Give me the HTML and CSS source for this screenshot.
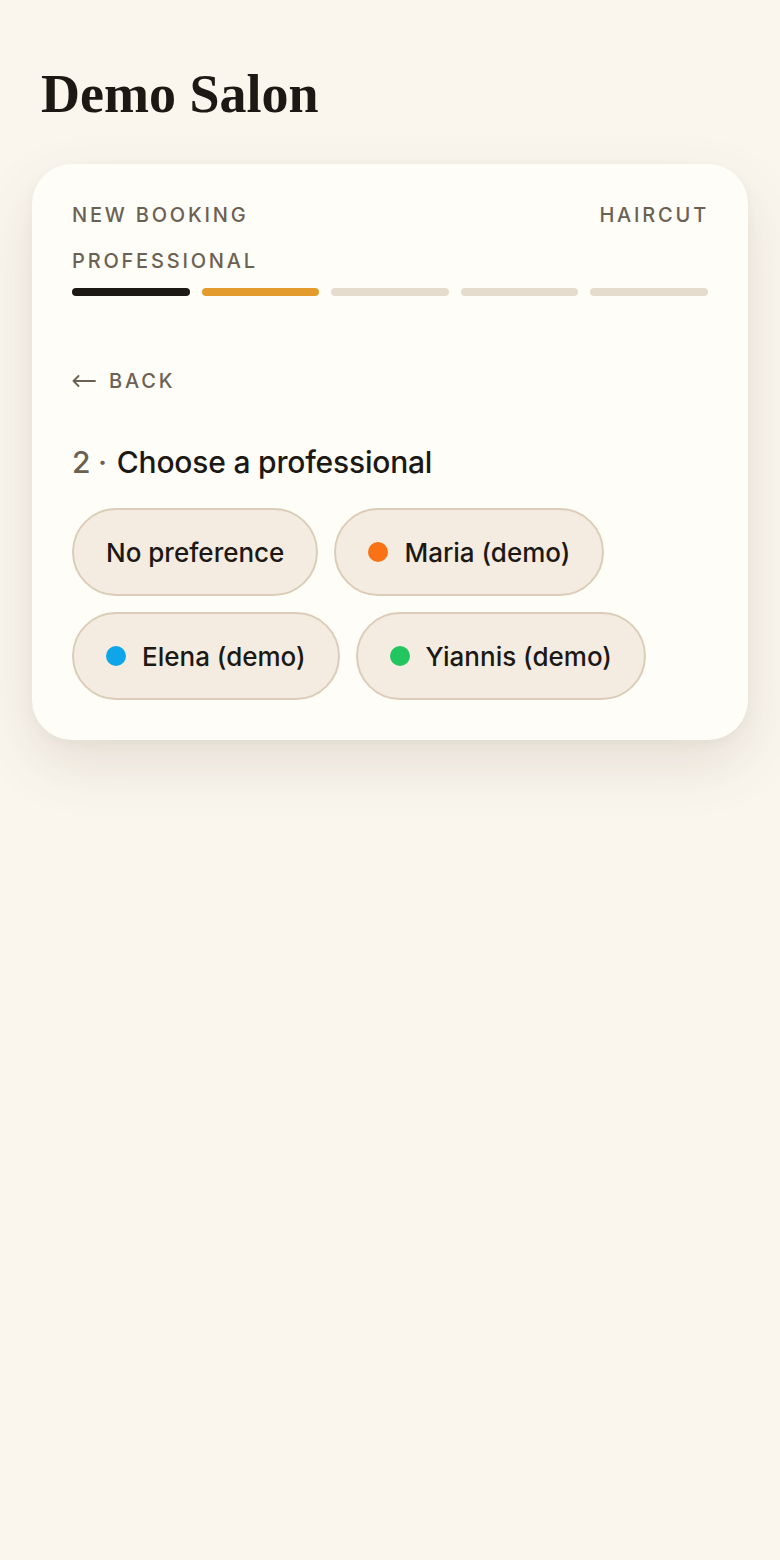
FILE: index.html
```html
<!DOCTYPE html>
<html lang="en">
<head>
<meta charset="utf-8">
<title>Demo Salon</title>
<link rel="stylesheet" href="styles.css">
</head>
<body>
<main class="page">
  <h1 class="title">Demo Salon</h1>
  <section class="card">
    <div class="meta">
      <span class="label">New booking</span>
      <span class="label">Haircut</span>
    </div>
    <div class="label step-name">Professional</div>
    <div class="progress">
      <span class="seg done"></span>
      <span class="seg current"></span>
      <span class="seg"></span>
      <span class="seg"></span>
      <span class="seg"></span>
    </div>
    <button class="back">
      <svg class="arrow" width="24" height="12" viewBox="0 0 24 12" aria-hidden="true"><path d="M23 6H1.5M6.5 1L1.5 6L6.5 11" fill="none" stroke="#6b6152" stroke-width="1.8" stroke-linecap="round" stroke-linejoin="round"/></svg>
      <span>Back</span>
    </button>
    <h2 class="heading"><span class="num">2 ·</span> Choose a professional</h2>
    <div class="pills">
      <button class="pill">No preference</button>
      <button class="pill"><span class="dot orange"></span>Maria (demo)</button>
      <button class="pill"><span class="dot blue"></span>Elena (demo)</button>
      <button class="pill"><span class="dot green"></span>Yiannis (demo)</button>
    </div>
  </section>
</main>
</body>
</html>
```
FILE: styles.css
```css
* { box-sizing: border-box; }
html, body { margin: 0; padding: 0; }
body {
  background: #faf6ee;
  font-family: "Inter", "Liberation Sans", sans-serif;
  color: #1c1814;
  width: 780px;
  min-height: 1560px;
}
.page {
  padding: 64px 32px 0 32px;
}
.title {
  margin: 0 0 0 9px;
  font-family: "Liberation Serif", "DejaVu Serif", serif;
  font-weight: 700;
  font-size: 54px;
  line-height: 60px;
  letter-spacing: 0;
  color: #1c1814;
}
.card {
  margin-top: 40px;
  background: #fffdf8;
  border-radius: 40px;
  padding: 40px 40px 40px 40px;
  box-shadow: 0 24px 60px rgba(80, 60, 30, 0.12), 0 4px 12px rgba(80,60,30,0.04);
}
.meta {
  display: flex;
  justify-content: space-between;
}
.label {
  font-size: 20px;
  line-height: 22px;
  font-weight: 500;
  letter-spacing: 2.8px;
  text-transform: uppercase;
  color: #6b6152;
}
.meta .label:last-child { margin-right: -1px; }
.step-name { margin-top: 24px; }
.progress {
  display: flex;
  gap: 12px;
  margin-top: 16px;
}
.seg {
  flex: 1;
  height: 8px;
  border-radius: 4px;
  background: #e6dccd;
}
.seg.done { background: #1c1814; }
.seg.current { background: #e39b2e; }
.back {
  display: flex;
  align-items: center;
  gap: 13px;
  margin-top: 74px;
  padding: 0;
  border: 0;
  background: none;
  font-family: inherit;
  font-size: 20px;
  line-height: 22px;
  font-weight: 500;
  letter-spacing: 2.8px;
  text-transform: uppercase;
  color: #6b6152;
}
.back .arrow { flex: none; }
.heading {
  margin: 52px 0 0 0;
  font-size: 30px;
  line-height: 36px;
  font-weight: 500;
  letter-spacing: -0.2px;
  color: #1c1814;
}
.heading .num { color: #6b6152; margin-right: 2px; }
.pills {
  display: flex;
  flex-wrap: wrap;
  gap: 16px;
  margin-top: 28px;
}
.pill {
  display: flex;
  align-items: center;
  gap: 16px;
  height: 88px;
  padding: 0 32px;
  border: 2px solid #dccdb8;
  border-radius: 44px;
  background: #f4ece1;
  font-family: inherit;
  font-size: 26px;
  font-weight: 500;
  color: #1c1814;
}
.dot {
  width: 20px;
  height: 20px;
  border-radius: 50%;
  flex: none;
}
.dot.orange { background: #f97316; }
.dot.blue { background: #0ea5e9; }
.dot.green { background: #22c55e; }
```
